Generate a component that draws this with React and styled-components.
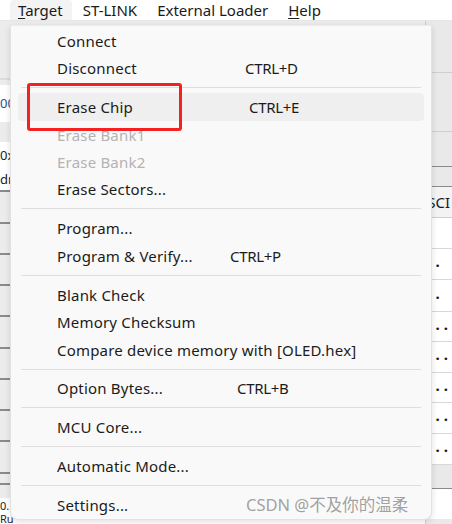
import React from "react";
import styled, { createGlobalStyle } from "styled-components";

const Global = createGlobalStyle`
  html, body { margin: 0; padding: 0; background: #f0f0f0; }
  body { font-family: "Noto Sans", "Open Sans", "Noto Sans CJK SC", sans-serif; }
  #root { width: 452px; height: 524px; overflow: hidden; }
`;

const Page = styled.div`
  position: relative;
  width: 452px;
  height: 524px;
  overflow: hidden;
  display: flex;
  flex-direction: column;
  background: #f0f0f0;
`;

const MenuBar = styled.div`
  height: 24px;
  display: flex;
  align-items: stretch;
  background: #ffffff;
  padding-left: 10px;
  border-bottom: 1px solid #e6e6e6;
`;

const BarItem = styled.div`
  display: flex;
  align-items: center;
  padding: 0 9px 0 8px;
  margin-right: 3px;
  font-size: 15px;
  color: #1a1a1a;
  background: ${(p) => (p.$active ? "#f3f3f3" : "transparent")};
  border-radius: 4px 4px 0 0;
  u { text-decoration: underline; text-underline-offset: 2px; }
`;

const Workspace = styled.div`
  flex: 1;
  display: flex;
`;

const LeftPane = styled.div`
  width: 432px;
  display: flex;
  flex-direction: column;
  background: #ececec;
`;

const LeftBlock = styled.div`
  flex: none;
  height: ${(p) => p.$h}px;
  border-bottom: ${(p) => (p.$line ? `2px solid ${p.$line}` : "none")};
  background: ${(p) => p.$bg || "transparent"};
  font-size: ${(p) => (p.$h < 16 ? 11 : 13)}px;
  line-height: 1;
  color: ${(p) => p.$color || "#222"};
  display: flex;
  align-items: center;
  overflow: hidden;
  white-space: nowrap;
`;

const RightPane = styled.div`
  flex: 1;
  display: flex;
  flex-direction: column;
  background: #e9e9e9;
  border-left: 1px solid #cfcfcf;
`;

const RightBlock = styled.div`
  flex: none;
  height: ${(p) => p.$h}px;
  border-bottom: ${(p) => (p.$line ? `1px solid ${p.$line}` : "none")};
  background: ${(p) => p.$bg || "transparent"};
  font-size: 15px;
  font-weight: ${(p) => (p.$dots ? 700 : 400)};
  color: #1a1a1a;
  display: flex;
  align-items: center;
  padding-left: 1px;
  padding-bottom: ${(p) => (p.$dots ? "6px" : "0")};
  box-sizing: border-box;
  letter-spacing: ${(p) => (p.$dots ? "4px" : "0")};
  overflow: hidden;
  white-space: nowrap;
`;

const Menu = styled.div`
  position: absolute;
  left: 10px;
  top: 25px;
  width: 420px;
  height: 492px;
  padding-top: 1px;
  background: #f9f9f9;
  border: 1px solid #e2e2e2;
  border-top-color: #ececec;
  border-radius: 0 0 8px 8px;
  box-shadow: 0 2px 6px rgba(0, 0, 0, 0.12);
  display: flex;
  flex-direction: column;
`;

const Item = styled.div`
  height: 27.5px;
  margin: 0 7px;
  padding-left: 39px;
  display: grid;
  grid-template-columns: ${(p) => p.$split || 300}px 1fr;
  align-items: center;
  font-size: 15px;
  letter-spacing: 0.2px;
  color: ${(p) => (p.$disabled ? "#b3b3b3" : "#1b1b1b")};
  background: ${(p) => (p.$hover ? "#efefef" : "transparent")};
  border-radius: 4px;
  white-space: nowrap;
`;

const Shortcut = styled.span`
  color: #1b1b1b;
  letter-spacing: -0.3px;
`;

const Sep = styled.div`
  height: 11.5px;
  display: flex;
  align-items: center;
  padding: 0 10px;
  &::after {
    content: "";
    flex: 1;
    height: 1px;
    background: #dedede;
  }
`;

const Highlight = styled.div`
  position: absolute;
  left: 27px;
  top: 83px;
  width: 149px;
  height: 42px;
  border: 3px solid #f52020;
  border-radius: 3px;
`;

const Watermark = styled.div`
  position: absolute;
  left: 246px;
  top: 492px;
  font-size: 16.5px;
  color: rgba(150, 150, 150, 0.9);
  font-family: "Noto Sans", "Noto Sans CJK SC", sans-serif;
  white-space: nowrap;
`;

const menu = [
  { t: "Connect" },
  { t: "Disconnect", k: "CTRL+D", s: 188 },
  "sep",
  { t: "Erase Chip", k: "CTRL+E", s: 192, hover: true },
  { t: "Erase Bank1", d: true },
  { t: "Erase Bank2", d: true },
  { t: "Erase Sectors..." },
  "sep",
  { t: "Program..." },
  { t: "Program & Verify...", k: "CTRL+P", s: 173 },
  "sep",
  { t: "Blank Check" },
  { t: "Memory Checksum" },
  { t: "Compare device memory with [OLED.hex]" },
  "sep",
  { t: "Option Bytes...", k: "CTRL+B", s: 180 },
  "sep",
  { t: "MCU Core..." },
  "sep",
  { t: "Automatic Mode..." },
  "sep",
  { t: "Settings..." },
];

const leftBlocks = [
  { h: 57, line: "#dcdcdc" },
  { h: 5 },
  { h: 37, bg: "#fff", c: "#2a4c9a", txt: "00" },
  { h: 20 },
  { h: 27, bg: "#fff", txt: "0x" },
  { h: 21, bg: "#fff", txt: "dr", line: "#8a8a8a" },
  { h: 30, line: "#8a8a8a" },
  { h: 29, line: "#8a8a8a" },
  { h: 29, line: "#8a8a8a" },
  { h: 29, line: "#8a8a8a" },
  { h: 30, line: "#8a8a8a" },
  { h: 29, line: "#8a8a8a" },
  { h: 29, line: "#8a8a8a" },
  { h: 29, line: "#8a8a8a" },
  { h: 30, line: "#8a8a8a" },
  { h: 9, line: "#8a8a8a" },
  { h: 13 },
  { h: 14, bg: "#fff", txt: "0." },
  { h: 12, bg: "#fff", txt: "Ru" },
];

const rightBlocks = [
  { h: 52, line: "#cfcfcf" },
  { h: 59, line: "#cfcfcf" },
  { h: 35, line: "#8a8a8a" },
  { h: 20, line: "#8a8a8a" },
  { h: 31, txt: "SCI", bg: "#f3f3f3", line: "#cfcfcf" },
  { h: 31, txt: ".", bg: "#fff", line: "#d8d8d8" },
  { h: 31, txt: "..", bg: "#fff", line: "#d8d8d8" },
  { h: 32, txt: "..", bg: "#fff", line: "#d8d8d8" },
  { h: 30, txt: "...", bg: "#fff", line: "#d8d8d8" },
  { h: 31, txt: "...", bg: "#fff", line: "#d8d8d8" },
  { h: 30, txt: "...", bg: "#fff", line: "#d8d8d8" },
  { h: 31, txt: "...", bg: "#fff", line: "#d8d8d8" },
  { h: 31, txt: "...", bg: "#fff", line: "#d8d8d8" },
  { h: 24, line: "#8a8a8a" },
  { h: 30, bg: "#fff" },
];

export default function App() {
  return (
    <Page>
      <Global />
      <MenuBar>
        <BarItem $active>
          <span><u>T</u>arget</span>
        </BarItem>
        <BarItem>ST-LINK</BarItem>
        <BarItem>External Loader</BarItem>
        <BarItem>
          <span><u>H</u>elp</span>
        </BarItem>
      </MenuBar>
      <Workspace>
        <LeftPane>
          {leftBlocks.map((b, i) => (
            <LeftBlock key={i} $h={b.h} $bg={b.bg} $line={b.line} $color={b.c}>
              {b.txt}
            </LeftBlock>
          ))}
        </LeftPane>
        <RightPane>
          {rightBlocks.map((b, i) => (
            <RightBlock
              key={i}
              $h={b.h}
              $bg={b.bg}
              $line={b.line}
              $dots={b.txt && b.txt.startsWith(".")}
            >
              {b.txt}
            </RightBlock>
          ))}
        </RightPane>
      </Workspace>
      <Menu>
        {menu.map((m, i) =>
          m === "sep" ? (
            <Sep key={i} />
          ) : (
            <Item key={i} $split={m.s} $disabled={m.d} $hover={m.hover}>
              <span>{m.t}</span>
              {m.k && <Shortcut>{m.k}</Shortcut>}
            </Item>
          )
        )}
      </Menu>
      <Highlight />
      <Watermark>CSDN @不及你的温柔</Watermark>
    </Page>
  );
}
